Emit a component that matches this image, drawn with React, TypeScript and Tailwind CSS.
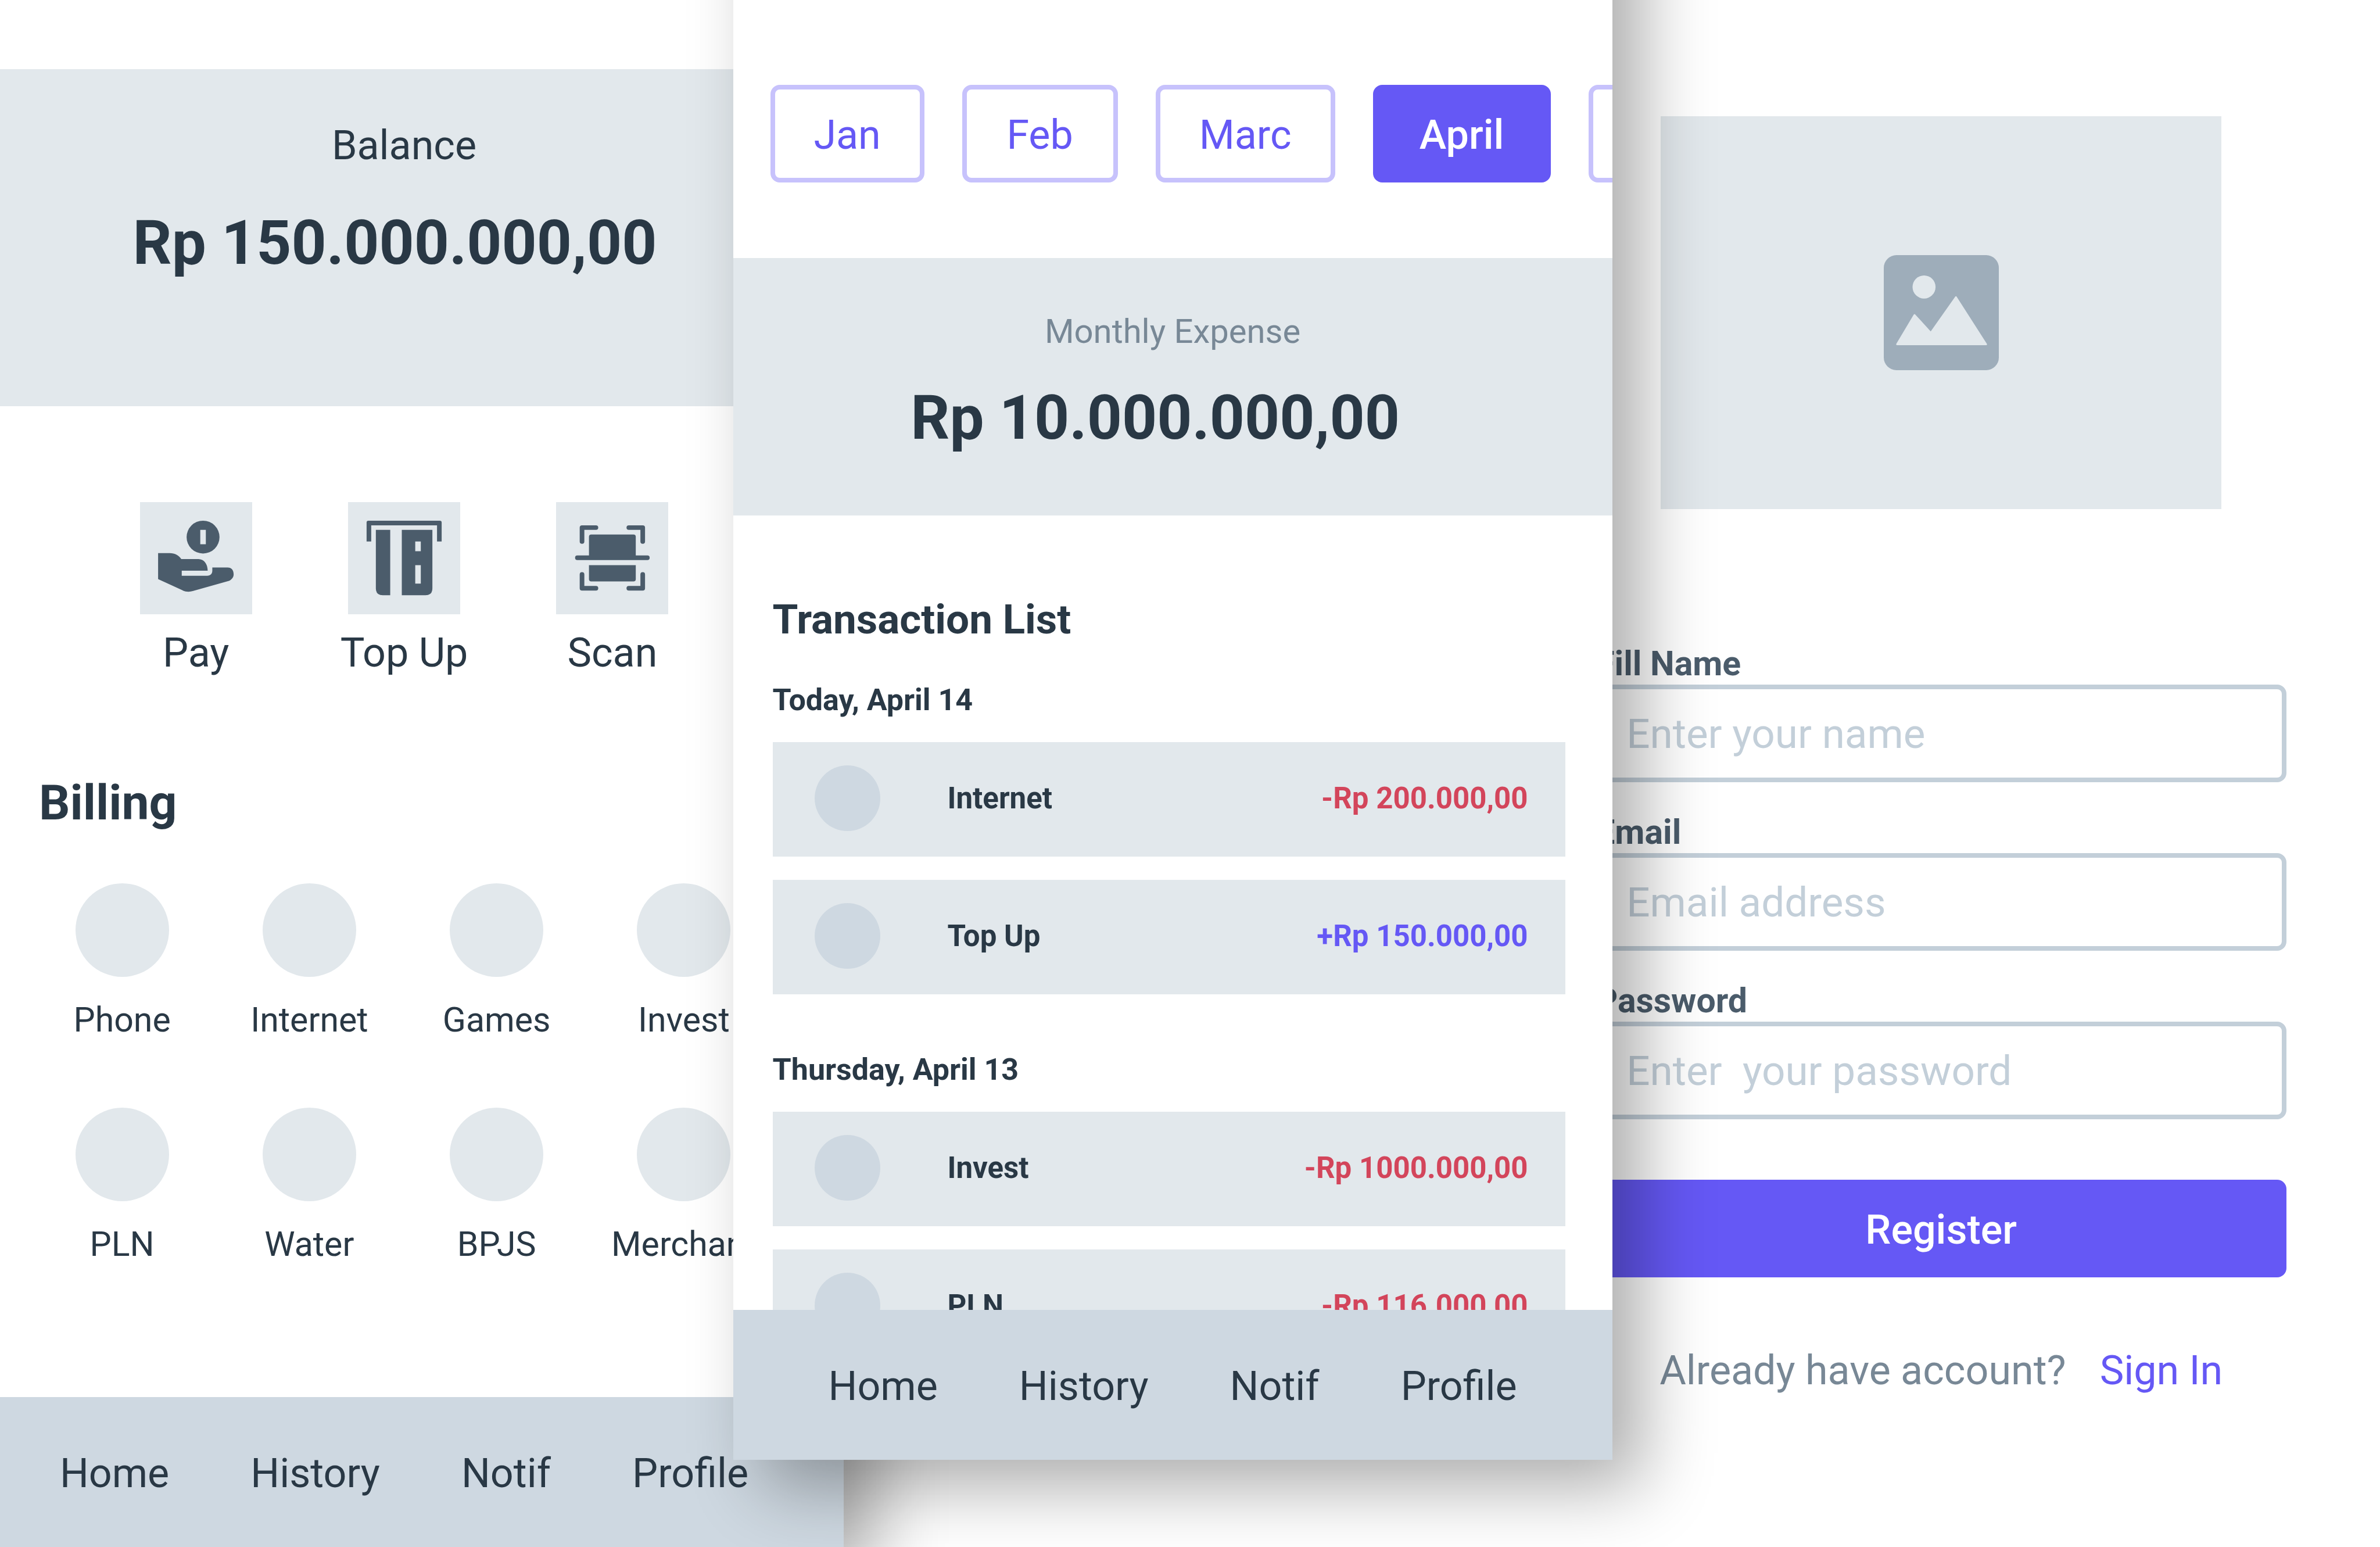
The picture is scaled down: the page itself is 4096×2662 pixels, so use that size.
import type { ReactNode } from "react";

const navItems = ["Home", "History", "Notif", "Profile"];

function BottomNav({ label }: { label: string }) {
  return (
    <nav
      aria-label={label}
      className="flex h-[258px] shrink-0 items-center justify-center gap-[140px] bg-[#ced8e1] pt-1 text-[70px] leading-[88px] text-[#293845]"
    >
      {navItems.map((item) => (
        <a key={item} href="#">
          {item}
        </a>
      ))}
    </nav>
  );
}

function PayIcon() {
  return (
    <svg viewBox="0 0 242 242" className="size-full" fill="#4b5c6b" aria-hidden="true">
      <path
        fillRule="evenodd"
        d="M136 40a35.500 35.500 0 1 1 0 71a35.500 35.500 0 1 1 0-71ZM130 60V91H142V60Z"
      />
      <path d="M39 110H64C75 110 84 115 89 123H126C138 123 146 134 146 148H90V159H145C152 159 156 154 156 148V141H189C197 141 202 146 202 156C202 162 198 167 192 170L114 192C107 194 98 194 91 190L39 166Z" />
    </svg>
  );
}

function TopUpIcon() {
  return (
    <svg viewBox="0 0 242 242" className="size-full" fill="#4b5c6b" aria-hidden="true">
      <path d="M44 40H198Q202 40 202 44V85H192V50H50V85H40V44Q40 40 44 40Z" />
      <path d="M60 60H91V201H75Q60 201 60 186Z" />
      <path
        fillRule="evenodd"
        d="M116 60H182V186Q182 201 167 201H116ZM145 85V106H157V85ZM145 136V176H157V136Z"
      />
    </svg>
  );
}

function ScanIcon() {
  return (
    <svg viewBox="0 0 242 242" className="size-full" fill="#4b5c6b" aria-hidden="true">
      <path
        d="M56 85V55H86M157 55H187V85M56 156V186H86M157 186H187V156M46 120H197"
        fill="none"
        stroke="#4b5c6b"
        strokeWidth="10"
        strokeLinecap="round"
        strokeLinejoin="round"
      />
      <path d="M76 70H167Q172 70 172 75V120H71V75Q71 70 76 70Z" />
      <path d="M71 136H172V166Q172 171 167 171H76Q71 171 71 166Z" />
    </svg>
  );
}

const actions: { label: string; icon: ReactNode }[] = [
  { label: "Pay", icon: <PayIcon /> },
  { label: "Top Up", icon: <TopUpIcon /> },
  { label: "Scan", icon: <ScanIcon /> },
];

const billing = ["Phone", "Internet", "Games", "Invest", "PLN", "Water", "BPJS", "Merchant"];

function HomeScreen() {
  return (
    <section className="-ml-[1.49%] flex w-[36.94%] shrink-0 flex-col bg-white pt-[119px] shadow-[50px_50px_115px_rgba(0,0,0,0.33)]">
      <div className="bg-[#e2e8ec] pt-[91px] pb-[220px] text-center">
        <p className="text-[70px] leading-[80px]">Balance</p>
        <p className="mt-[69px] pr-8 text-[105px] leading-[120px] font-bold">Rp 150.000.000,00</p>
      </div>
      <div className="mt-[165px] flex justify-center gap-[152px]">
        {actions.map((action) => (
          <button key={action.label} type="button" className="flex flex-col items-center gap-[26px]">
            <span className="block size-[193px] bg-[#e2e8ec]">{action.icon}</span>
            <span className="text-[70px] leading-[80px]">{action.label}</span>
          </button>
        ))}
      </div>
      <h2 className="mt-[171px] pl-32 text-[84px] leading-[96px] font-bold">Billing</h2>
      <div className="mt-[90px] grid grid-cols-4 gap-y-[115px] pr-[114px] pl-[110px]">
        {billing.map((item) => (
          <button key={item} type="button" className="flex flex-col items-center gap-[38px]">
            <span className="block size-[161px] rounded-full bg-[#e2e8ec]" />
            <span className="text-[59px] leading-[72px]">{item}</span>
          </button>
        ))}
      </div>
      <div className="mt-auto">
        <BottomNav label="Home screen" />
      </div>
    </section>
  );
}

const months = [
  { name: "January", label: "Jan", style: "w-[265px] border-[#c7c2fc] text-[#6558f5]" },
  { name: "February", label: "Feb", style: "w-[268px] border-[#c7c2fc] text-[#6558f5]" },
  { name: "March", label: "Marc", style: "w-[309px] border-[#c7c2fc] text-[#6558f5]" },
  { name: "April", label: "April", style: "w-[306px] border-[#6558f5] bg-[#6558f5] font-medium text-white" },
  { name: "May", label: "", style: "w-[306px] border-[#c7c2fc] text-[#6558f5]" },
];

const days = [
  {
    date: "Today, April 14",
    rows: [
      { name: "Internet", amount: "-Rp 200.000,00", color: "text-[#d3455b]" },
      { name: "Top Up", amount: "+Rp 150.000,00", color: "text-[#6558f5]" },
    ],
  },
  {
    date: "Thursday, April 13",
    rows: [
      { name: "Invest", amount: "-Rp 1000.000,00", color: "text-[#d3455b]" },
      { name: "PLN", amount: "-Rp 116.000,00", color: "text-[#d3455b]" },
    ],
  },
];

function HistoryScreen() {
  return (
    <section className="z-10 -mt-[200px] mb-[150px] -ml-[4.65%] flex w-[36.94%] shrink-0 flex-col bg-white shadow-[50px_46px_115px_rgba(0,0,0,0.33)]">
      <div className="min-h-0 flex-1 overflow-hidden pt-[346px]">
        <div className="flex gap-[65px] pl-16">
          {months.map((month) => (
            <button
              key={month.name}
              type="button"
              aria-label={month.name}
              className={`h-[168px] shrink-0 rounded-2xl border-8 pt-1 text-center text-[70px] leading-[88px] ${month.style}`}
            >
              {month.label}
            </button>
          ))}
        </div>
        <div className="mt-[130px] bg-[#e2e8ec] pt-[90px] pb-[107px] text-center">
          <p className="text-[58px] leading-[72px] text-[#788896]">Monthly Expense</p>
          <p className="mt-[54px] pr-[60px] text-[105px] leading-[120px] font-bold">Rp 10.000.000,00</p>
        </div>
        <div className="pr-[81px] pl-[68px]">
          <h2 className="mt-[135px] text-[71px] leading-[88px] font-bold">Transaction List</h2>
          <div className="mt-[63px] flex flex-col gap-[98px]">
            {days.map((day) => (
              <div key={day.date}>
                <h3 className="text-[52px] leading-[64px] font-bold">{day.date}</h3>
                <ul className="mt-10 flex flex-col gap-10">
                  {day.rows.map((row) => (
                    <li
                      key={row.name}
                      className="flex h-[197px] items-center bg-[#e2e8ec] pr-[64px] pb-1 pl-[72px] text-[51px] leading-[64px] font-bold"
                    >
                      <span className="size-[113px] rounded-full bg-[#ced8e1]" />
                      <span className="ml-[116px]">{row.name}</span>
                      <span className={`ml-auto ${row.color}`}>{row.amount}</span>
                    </li>
                  ))}
                </ul>
              </div>
            ))}
          </div>
        </div>
      </div>
      <BottomNav label="History screen" />
    </section>
  );
}

const fields = [
  { id: "name", label: "Fill Name", placeholder: "Enter your name", type: "text" },
  { id: "email", label: "Email", placeholder: "Email address", type: "email" },
  { id: "password", label: "Password", placeholder: "Enter  your password", type: "password" },
];

function RegisterScreen() {
  return (
    <section className="-ml-[4.65%] flex w-[36.94%] shrink-0 flex-col px-[162px] pt-[200px]">
      <div className="mx-[112px] flex h-[676px] items-center justify-center bg-[#e2e8ec]">
        <svg viewBox="0 0 100 100" className="size-[198px]" aria-hidden="true">
          <rect width="100" height="100" rx="11" fill="#9eadba" />
          <circle cx="35" cy="27.700" r="10" fill="#e2e8ec" />
          <path
            d="M11.500 77.500L26.700 52L40.900 67.500L62.700 36.500L89 77.500Z"
            fill="#e2e8ec"
            stroke="#e2e8ec"
            strokeWidth="1.500"
            strokeLinejoin="round"
          />
        </svg>
      </div>
      <form className="mt-[230px] flex flex-col">
        <div className="flex flex-col gap-[50px]">
          {fields.map((field) => (
            <div key={field.id} className="flex flex-col">
              <label htmlFor={field.id} className="text-[59px] leading-[72px] font-bold text-[#4b5c6b]">
                {field.label}
              </label>
              <input
                id={field.id}
                type={field.type}
                placeholder={field.placeholder}
                className="h-[168px] w-full rounded-2xl border-8 border-[#c3cfd9] bg-transparent px-[45px] text-[71px] placeholder:text-[#c3cfd9]"
              />
            </div>
          ))}
        </div>
        <button
          type="button"
          className="mt-[104px] h-[168px] rounded-2xl bg-[#6558f5] pt-1 text-[70px] leading-[88px] font-medium text-white"
        >
          Register
        </button>
      </form>
      <p className="mt-[116px] flex justify-center gap-[58px] text-[70px] leading-[88px] whitespace-nowrap text-[#788896]">
        Already have account?
        <a href="#" className="text-[#6558f5]">
          Sign In
        </a>
      </p>
    </section>
  );
}

export default function App() {
  return (
    <main className="flex h-screen overflow-hidden bg-white font-['Roboto',sans-serif] text-[#293845]">
      <HomeScreen />
      <HistoryScreen />
      <RegisterScreen />
    </main>
  );
}
